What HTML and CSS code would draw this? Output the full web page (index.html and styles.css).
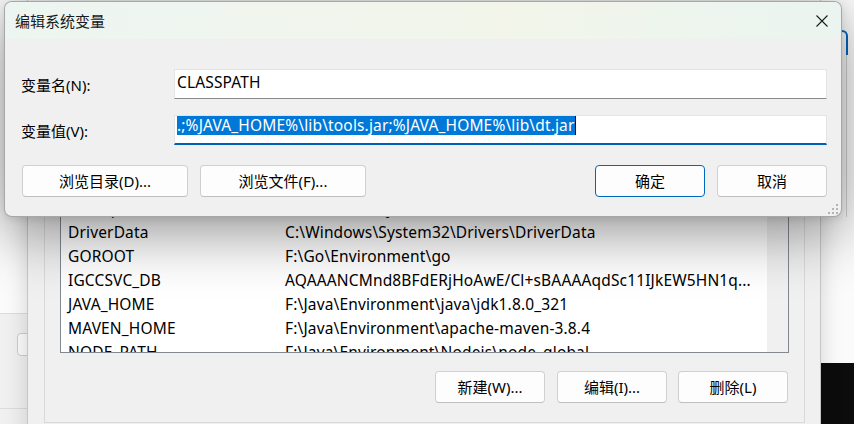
FILE: index.html
```html
<!DOCTYPE html>
<html lang="zh-CN">
<head>
<meta charset="utf-8">
<title>编辑系统变量</title>
<link rel="stylesheet" href="styles.css">
</head>
<body>
<div class="desk">
  <div class="win-left">
    <div class="wl-top"></div>
    <div class="wl-bottom">
      <div class="wl-btn"></div>
      <div class="wl-foot"></div>
    </div>
  </div>

  <div class="win-right">
    <div class="wr-upper">
      <div class="wr-field">
        <div class="wr-focus"></div>
        <div class="wr-rest"></div>
      </div>
    </div>
    <div class="wr-black"></div>
  </div>

  <div class="win-env">
    <div class="env-panel">
      <div class="list">
        <div class="list-rows">
          <div class="row"><span>ComSpec</span><span>C:\Windows\system32\cmd.exe</span></div>
          <div class="row"><span>DriverData</span><span>C:\Windows\System32\Drivers\DriverData</span></div>
          <div class="row"><span>GOROOT</span><span>F:\Go\Environment\go</span></div>
          <div class="row"><span>IGCCSVC_DB</span><span>AQAAANCMnd8BFdERjHoAwE/Cl+sBAAAAqdSc11IJkEW5HN1q...</span></div>
          <div class="row"><span>JAVA_HOME</span><span>F:\Java\Environment\java\jdk1.8.0_321</span></div>
          <div class="row"><span>MAVEN_HOME</span><span>F:\Java\Environment\apache-maven-3.8.4</span></div>
          <div class="row"><span>NODE_PATH</span><span>F:\Java\Environment\Nodejs\node_global</span></div>
        </div>
        <div class="scrollbar"></div>
      </div>
      <div class="env-actions">
        <button class="btn btn-s">新建(W)...</button>
        <button class="btn btn-s gap12">编辑(I)...</button>
        <button class="btn btn-s gap11">删除(L)</button>
      </div>
    </div>
  </div>

  <div class="dialog">
    <div class="titlebar">
      <div class="title">编辑系统变量</div>
      <svg class="close" width="12" height="12" viewBox="0 0 12 12"><path d="M0.5 0.5 L11.5 11.5 M11.5 0.5 L0.5 11.5" stroke="#1c1c1c" stroke-width="1.1" fill="none"/></svg>
    </div>
    <div class="form">
      <div class="label">变量名(N):</div>
      <div class="field">CLASSPATH</div>
      <div class="label">变量值(V):</div>
      <div class="field focus"><span class="sel">.;%JAVA_HOME%\lib\tools.jar;%JAVA_HOME%\lib\dt.jar</span><span class="caret"></span></div>
      <div class="dlg-actions">
        <button class="btn btn-w">浏览目录(D)...</button>
        <button class="btn btn-w">浏览文件(F)...</button>
        <div class="spacer"></div>
        <button class="btn btn-s default">确定</button>
        <button class="btn btn-s">取消</button>
      </div>
    </div>
    <svg class="grip" width="12" height="12" viewBox="0 0 12 12">
      <rect x="9" y="1" width="2" height="2" fill="#b4b4b4"/>
      <rect x="5" y="5" width="2" height="2" fill="#b4b4b4"/>
      <rect x="9" y="5" width="2" height="2" fill="#b4b4b4"/>
      <rect x="1" y="9" width="2" height="2" fill="#b4b4b4"/>
      <rect x="5" y="9" width="2" height="2" fill="#b4b4b4"/>
      <rect x="9" y="9" width="2" height="2" fill="#b4b4b4"/>
    </svg>
  </div>
</div>
</body>
</html>
```
FILE: styles.css
```css
* { box-sizing: border-box; }
html, body { margin: 0; padding: 0; }
body {
  width: 854px;
  height: 424px;
  overflow: hidden;
  background: #f3f3f3;
  font-family: "Noto Sans", "Noto Sans CJK SC", sans-serif;
  font-size: 15px;
  color: #000;
}
.desk { position: relative; width: 854px; height: 424px; overflow: hidden; }

/* far-left background window */
.win-left {
  position: absolute; left: 0; top: 0; width: 40px; height: 424px;
  display: flex; flex-direction: column; background: #f0f0f0;
}
.wl-top { height: 314px; background: #fbfbfb; border-bottom: 1px solid #dcdcdc; }
.wl-bottom { flex: 1; padding: 19px 0 0 17px; }
.wl-btn { width: 30px; height: 23px; border: 1px solid #cdcdcd; border-radius: 4px; background: #fbfbfb; }
.wl-foot { margin: 52px 0 0 -17px; border-top: 1px solid #dcdcdc; }

/* right background windows */
.win-right {
  position: absolute; left: 820px; top: 0; width: 34px; height: 424px;
  display: flex; flex-direction: column;
}
.wr-upper { flex: 1; background: #fbfbfb; padding-top: 30px; }
.wr-field { width: 28px; height: 187px; display: flex; flex-direction: column; }
.wr-focus { height: 25px; border-top: 2px solid #0067c0; border-right: 2px solid #0067c0; border-top-right-radius: 6px; }
.wr-rest { flex: 1; border-right: 1px solid #d2d2d2; margin-right: 1px; }
.wr-black { height: 61px; background: #0c0c0c; }

/* environment variables window */
.win-env {
  position: absolute; left: 27px; top: 0; width: 794px; height: 440px;
  background: #f0f0f0;
  border-left: 1px solid #c6c6c6; border-right: 1px solid #c6c6c6;
  padding: 178px 15px 0 16px;
  box-shadow: 0 0 22px rgba(0,0,0,0.16);
}
.env-panel { border: 1px solid #d9d9d9; padding: 16px 15px 19px 15px; }
.list {
  height: 158px; border: 1px solid #828790; background: #fff;
  display: flex; overflow: hidden;
}
.list-rows { flex: 1; overflow: hidden; }
.row {
  height: 24px; display: grid; grid-template-columns: 217px 1fr;
  align-items: center; white-space: nowrap; line-height: 19px;
  font-size: 15.5px; letter-spacing: 0.15px;
}
.row span { padding-left: 7px; }
.scrollbar { width: 21px; background: #f0f0f0; }
.env-actions { display: flex; justify-content: flex-end; margin-top: 18px; padding-right: 1px; }
.gap12 { margin-left: 12px; }
.gap11 { margin-left: 11px; }

/* buttons */
.btn {
  height: 32px; padding: 0;
  font-family: "Noto Sans", "Noto Sans CJK SC", sans-serif;
  font-size: 15px; color: #000;
  background: #fdfdfd;
  border: 1px solid #d0d0d0; border-bottom-color: #bfbfbf;
  border-radius: 4px;
  line-height: 19px;
}
.btn-s { width: 110px; }
.btn-w { width: 166px; }
.btn.default { border-color: #0067c0; }

/* top dialog */
.dialog {
  position: absolute; left: 4px; top: 1px; width: 838px; height: 216px;
  border: 1px solid rgba(0,0,0,0.3); border-radius: 8px;
  background: #f0f0f0; overflow: hidden;
  display: flex; flex-direction: column;
  box-shadow: 0 16px 60px rgba(0,0,0,0.42), 0 2px 8px rgba(0,0,0,0.1);
}
.titlebar {
  height: 37px; flex: none; display: flex; align-items: center;
  padding: 0 13px 0 10px;
  background: linear-gradient(90deg, #edf5f2 0%, #f1f5ee 35%, #f3f5ea 60%, #eef5ed 80%, #ebf4f0 100%);
}
.title { flex: 1; color: #1a1a1a; }
.close { display: block; }
.form {
  flex: 1; padding: 30px 14px 0 16px;
  display: grid; grid-template-columns: 153px 1fr; row-gap: 16px;
  align-content: start;
}
.label { display: flex; align-items: center; }
.field {
  height: 30px; background: #fff;
  border: 1px solid #e4e4e4; border-bottom-color: #8a8a8a;
  padding: 3px 2px 0; line-height: 19px;
  font-size: 15.5px; letter-spacing: 0.15px;
  white-space: nowrap;
}
.field.focus { border-bottom: 2px solid #005fb8; padding-top: 0; }
.sel { background: #0078d7; color: #fff; display: inline-block; vertical-align: top; }
.caret { display: inline-block; width: 1px; height: 19px; background: #111; vertical-align: top; }
.dlg-actions { grid-column: 1 / -1; display: flex; gap: 12px; margin-top: 4px; padding-left: 1px; }
.spacer { flex: 1; }
.grip { position: absolute; right: 2px; bottom: 1px; }
```
